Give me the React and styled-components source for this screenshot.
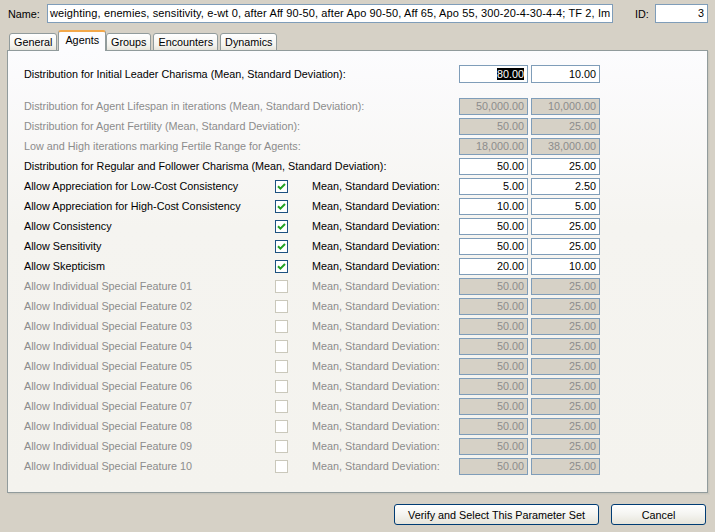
import React from 'react';
import styled, { createGlobalStyle } from 'styled-components';

const GlobalStyle = createGlobalStyle`
  html, body {
    margin: 0;
    padding: 0;
    background: #d6d1c6;
  }
  body {
    font-family: "Liberation Sans", Arial, sans-serif;
    font-size: 10.8px;
    color: #000;
  }
`;

const Window = styled.div`
  width: 715px;
  height: 532px;
  display: flex;
  flex-direction: column;
  box-sizing: border-box;
  padding: 4px 8px 0 7px;
`;

const TopBar = styled.div`
  display: flex;
  align-items: center;
  height: 19px;
  padding-left: 1px;
`;

const FieldLabel = styled.span`
  width: ${(p) => p.$w}px;
  margin-left: ${(p) => p.$ml || 0}px;
  flex: none;
`;

const TextBox = styled.div`
  box-sizing: border-box;
  height: ${(p) => p.$h || 18}px;
  width: ${(p) => p.$w}px;
  flex: none;
  border: 1px solid #7f9db9;
  background: ${(p) => (p.$disabled ? '#d6d1c6' : '#fff')};
  color: ${(p) => (p.$disabled ? '#8c8c8c' : '#000')};
  padding: 0 3px 0 2px;
  line-height: ${(p) => (p.$h || 18) - 2}px;
  white-space: nowrap;
  overflow: hidden;
  text-align: ${(p) => (p.$left ? 'left' : 'right')};
`;

const NameBox = styled(TextBox)`
  font-size: 11px;
  letter-spacing: 0.12px;
`;

const Selected = styled.span`
  background: #000;
  color: #fff;
`;

const Tabs = styled.div`
  display: flex;
  align-items: flex-end;
  margin-top: 7px;
  padding-left: 2px;
  height: 21px;
  position: relative;
  z-index: 1;
`;

const Tab = styled.div`
  box-sizing: border-box;
  height: ${(p) => (p.$active ? 21 : 18)}px;
  padding: 0 ${(p) => (p.$active ? 6 : 4)}px;
  margin-right: ${(p) => (p.$active ? 0 : 2)}px;
  margin-left: ${(p) => (p.$active ? -1 : 0)}px;
  border: 1px solid #919b9c;
  border-bottom: ${(p) => (p.$active ? 'none' : '1px solid #919b9c')};
  border-top: ${(p) => (p.$active ? '2px solid #f3a84a' : '1px solid #919b9c')};
  border-radius: 3px 3px 0 0;
  background: ${(p) =>
    p.$active ? '#fcfcfe' : 'linear-gradient(#ffffff, #f4f3ee 70%, #e6e4db)'};
  line-height: 16px;
  color: #000;
`;

const Panel = styled.div`
  box-sizing: border-box;
  width: 701px;
  height: 443px;
  margin-top: -1px;
  border: 1px solid #919b9c;
  box-shadow: 1px 1px 0 #c9c6bc, 2px 2px 0 #d0cdc3;
  background: linear-gradient(#fcfcfe, #f5f4f0 40%, #f4f3ee);
  padding: 14px 0 0 16px;
  display: flex;
  flex-direction: column;
`;

const Row = styled.div`
  display: grid;
  grid-template-columns: 251px 37px 147px 72px 69px;
  align-items: center;
  height: ${(p) => p.$h || 20}px;
  margin-bottom: ${(p) => p.$mb || 0}px;
  color: ${(p) => (p.$disabled ? '#8c8c8c' : '#000')};
`;

const WideLabel = styled.span`
  grid-column: 1 / 4;
  white-space: nowrap;
`;

const Label = styled.span`
  white-space: nowrap;
`;

const Box = styled.div`
  box-sizing: border-box;
  width: 13px;
  height: 13px;
  border: 1px solid ${(p) => (p.$disabled ? '#cac8bb' : '#1c5180')};
  background: #fff;
  display: flex;
  align-items: center;
  justify-content: center;
`;

const Footer = styled.div`
  display: flex;
  justify-content: flex-end;
  gap: 12px;
  padding: 11px 1px 0 0;
`;

const Button = styled.div`
  box-sizing: border-box;
  width: ${(p) => p.$w}px;
  height: 21px;
  border: 1px solid #003c74;
  border-radius: 3px;
  background: linear-gradient(#ffffff, #f4f4f0 50%, #e6e4da);
  display: flex;
  align-items: center;
  justify-content: center;
`;

const Check = () => (
  <svg width="9" height="9" viewBox="0 0 9 9">
    <path d="M1 4.2 L3.4 6.6 L8 2" fill="none" stroke="#21a121" strokeWidth="2" />
  </svg>
);

const features = [
  ['Allow Appreciation for Low-Cost Consistency', '5.00', '2.50'],
  ['Allow Appreciation for High-Cost Consistency', '10.00', '5.00'],
  ['Allow Consistency', '50.00', '25.00'],
  ['Allow Sensitivity', '50.00', '25.00'],
  ['Allow Skepticism', '20.00', '10.00'],
];

const specials = Array.from({ length: 10 }, (_, i) => String(i + 1).padStart(2, '0'));

const App = () => (
  <>
    <GlobalStyle />
    <Window>
      <TopBar>
        <FieldLabel $w={39}>Name:</FieldLabel>
        <NameBox $w={566} $h={19} $left>
          weighting, enemies, sensitivity, e-wt 0, after Aff 90-50, after Apo 90-50, Aff 65, Apo 55, 300-20-4-30-4-4; TF 2, Im
        </NameBox>
        <FieldLabel $w={20} $ml={22}>ID:</FieldLabel>
        <TextBox $w={53} $h={19}>3</TextBox>
      </TopBar>

      <Tabs>
        <Tab>General</Tab>
        <Tab $active>Agents</Tab>
        <Tab>Groups</Tab>
        <Tab>Encounters</Tab>
        <Tab>Dynamics</Tab>
      </Tabs>

      <Panel>
        <Row $h={18} $mb={13}>
          <WideLabel>Distribution for Initial Leader Charisma (Mean, Standard Deviation):</WideLabel>
          <TextBox $w={69}><Selected>80.00</Selected></TextBox>
          <TextBox $w={69}>10.00</TextBox>
        </Row>
        <Row $disabled>
          <WideLabel>Distribution for Agent Lifespan in iterations (Mean, Standard Deviation):</WideLabel>
          <TextBox $w={69} $h={17} $disabled>50,000.00</TextBox>
          <TextBox $w={69} $h={17} $disabled>10,000.00</TextBox>
        </Row>
        <Row $disabled>
          <WideLabel>Distribution for Agent Fertility (Mean, Standard Deviation):</WideLabel>
          <TextBox $w={69} $h={17} $disabled>50.00</TextBox>
          <TextBox $w={69} $h={17} $disabled>25.00</TextBox>
        </Row>
        <Row $disabled>
          <WideLabel>Low and High iterations marking Fertile Range for Agents:</WideLabel>
          <TextBox $w={69} $h={17} $disabled>18,000.00</TextBox>
          <TextBox $w={69} $h={17} $disabled>38,000.00</TextBox>
        </Row>
        <Row>
          <WideLabel>Distribution for Regular and Follower Charisma (Mean, Standard Deviation):</WideLabel>
          <TextBox $w={69} $h={17}>50.00</TextBox>
          <TextBox $w={69} $h={17}>25.00</TextBox>
        </Row>
        {features.map(([name, mean, sd]) => (
          <Row key={name}>
            <Label>{name}</Label>
            <Box><Check /></Box>
            <Label>Mean, Standard Deviation:</Label>
            <TextBox $w={69} $h={17}>{mean}</TextBox>
            <TextBox $w={69} $h={17}>{sd}</TextBox>
          </Row>
        ))}
        {specials.map((n) => (
          <Row key={n} $disabled>
            <Label>Allow Individual Special Feature {n}</Label>
            <Box $disabled />
            <Label>Mean, Standard Deviation:</Label>
            <TextBox $w={69} $h={17} $disabled>50.00</TextBox>
            <TextBox $w={69} $h={17} $disabled>25.00</TextBox>
          </Row>
        ))}
      </Panel>

      <Footer>
        <Button $w={205}>Verify and Select This Parameter Set</Button>
        <Button $w={95}>Cancel</Button>
      </Footer>
    </Window>
  </>
);

export default App;
